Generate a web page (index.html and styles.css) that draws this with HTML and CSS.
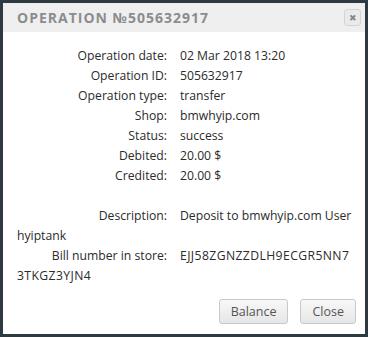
FILE: index.html
```html
<!DOCTYPE html>
<html>
<head>
<meta charset="utf-8">
<link rel="stylesheet" href="styles.css">
</head>
<body>
<div class="dialog">
  <div class="header">
    <span class="title">Operation №505632917</span>
    <span class="x">&#x2716;</span>
  </div>
  <div class="content">
    <div class="row"><span class="label">Operation date:</span>02 Mar 2018 13:20</div>
    <div class="row"><span class="label">Operation ID:</span>505632917</div>
    <div class="row"><span class="label">Operation type:</span>transfer</div>
    <div class="row"><span class="label">Shop:</span>bmwhyip.com</div>
    <div class="row"><span class="label">Status:</span>success</div>
    <div class="row"><span class="label">Debited:</span>20.00 $</div>
    <div class="row"><span class="label">Credited:</span>20.00 $</div>
    <div class="row empty"></div>
    <div class="row"><span class="label">Description:</span>Deposit to bmwhyip.com User hyiptank</div>
    <div class="row"><span class="label">Bill number in store:</span><span class="bill">EJJ58ZGNZZDLH9ECGR5NN73TKGZ3YJN4</span></div>
  </div>
  <div class="footer">
    <button class="btn">Balance</button>
    <button class="btn">Close</button>
  </div>
</div>
</body>
</html>
```
FILE: styles.css
```css
html, body { margin: 0; padding: 0; }
body {
  background: #2f3a40;
  width: 368px;
  height: 337px;
  padding: 3px;
  box-sizing: border-box;
  font-family: "Open Sans", sans-serif;
}
.dialog {
  background: #fff;
  height: 331px;
  width: 362px;
  display: flex;
  flex-direction: column;
}
.header {
  background: #efefef;
  height: 29px;
  display: flex;
  align-items: center;
  justify-content: space-between;
  padding: 0 4px 0 14px;
}
.title {
  text-transform: uppercase;
  font-weight: bold;
  font-size: 14px;
  color: #8c8c8c;
  letter-spacing: 1px;
}
.x {
  width: 15px;
  height: 15px;
  border: 1px solid #d3d3d3;
  border-radius: 3px;
  background: #eaeaea;
  color: #888;
  font-size: 9px;
  line-height: 15px;
  text-align: center;
}
.content {
  padding: 14px 12px 0 14px;
  font-size: 12.2px;
  font-weight: 500;
  line-height: 20px;
  color: #2b2b2b;
  flex: 1;
}
.row { min-height: 20px; }
.label {
  display: inline-block;
  width: 150px;
  text-align: right;
  margin-right: 13px;
}
.bill { word-break: break-all; letter-spacing: 0.4px; }
.footer {
  display: flex;
  justify-content: flex-end;
  gap: 12px;
  padding: 0 9px 10px 0;
}
.btn {
  font-family: "Open Sans", sans-serif;
  font-size: 12.5px;
  color: #555;
  height: 25px;
  padding: 0 11px;
  border: 1px solid #c8c8c8;
  border-radius: 3px;
  background: linear-gradient(#f8f8f8, #e6e6e6);
}
```
